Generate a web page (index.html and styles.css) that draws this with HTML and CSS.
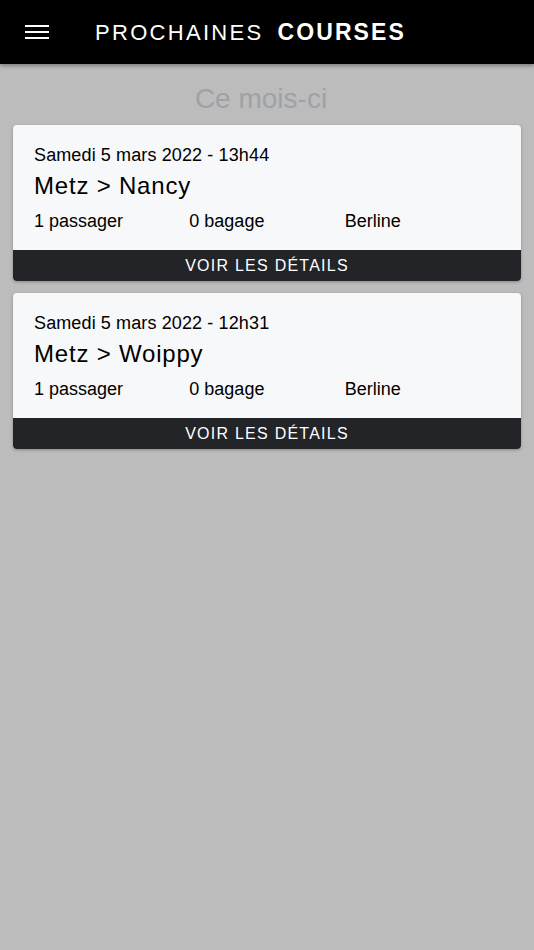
FILE: index.html
```html
<!DOCTYPE html>
<html lang="fr">
<head>
<meta charset="utf-8">
<title>Prochaines courses</title>
<link rel="stylesheet" href="styles.css">
</head>
<body>
<header class="topbar">
  <button class="menu-btn" aria-label="Menu">
    <svg width="24" height="16" viewBox="0 0 24 16"><rect x="0" y="1" width="24" height="2" fill="#fff"/><rect x="0" y="7" width="24" height="2" fill="#fff"/><rect x="0" y="13" width="24" height="2" fill="#fff"/></svg>
  </button>
  <h1 class="title"><span class="t-light">PROCHAINES</span><strong class="t-bold">COURSES</strong></h1>
</header>
<main class="content">
  <h2 class="month">Ce mois-ci</h2>
  <article class="card">
    <div class="card-body">
      <div class="date">Samedi 5 mars 2022 - 13h44</div>
      <div class="route">Metz &gt; Nancy</div>
      <div class="info">
        <span>1 passager</span>
        <span>0 bagage</span>
        <span>Berline</span>
      </div>
    </div>
    <div class="details">VOIR LES DÉTAILS</div>
  </article>
  <article class="card">
    <div class="card-body">
      <div class="date">Samedi 5 mars 2022 - 12h31</div>
      <div class="route">Metz &gt; Woippy</div>
      <div class="info">
        <span>1 passager</span>
        <span>0 bagage</span>
        <span>Berline</span>
      </div>
    </div>
    <div class="details">VOIR LES DÉTAILS</div>
  </article>
</main>
</body>
</html>
```
FILE: styles.css
```css
html, body {
  margin: 0;
  padding: 0;
}
body {
  background: #bcbcbc;
  font-family: "Liberation Sans", Arial, sans-serif;
  min-height: 950px;
}
.topbar {
  height: 64px;
  background: #000;
  display: flex;
  align-items: center;
  box-shadow: 0 2px 4px rgba(0,0,0,0.35);
  position: relative;
}
.menu-btn {
  background: none;
  border: 0;
  padding: 0;
  margin-left: 25px;
  width: 24px;
  height: 16px;
  display: flex;
  margin-top: -1px;
}
.title {
  margin: 1px 0 0 46px;
  color: #fff;
  font-size: 22px;
  font-weight: normal;
  line-height: 26px;
  display: flex;
  align-items: baseline;
}
.t-light {
  letter-spacing: 2.3px;
}
.t-bold {
  font-weight: bold;
  font-size: 23px;
  letter-spacing: 2.1px;
  margin-left: 14px;
}
.content {
  padding: 18px 13px 0;
}
.month {
  margin: 0 0 9px;
  padding-right: 12px;
  text-align: center;
  font-size: 28px;
  line-height: 34px;
  font-weight: normal;
  color: #9ea1a8;
}
.card {
  background: #f7f8fa;
  border-radius: 4px;
  overflow: hidden;
  box-shadow: 0 1px 3px rgba(0,0,0,0.3);
  margin-bottom: 12px;
}
.card-body {
  padding: 19px 21px 18px;
  color: #000;
}
.date {
  font-size: 18px;
  line-height: 22px;
  letter-spacing: 0.12px;
}
.route {
  font-size: 24px;
  line-height: 28px;
  margin-top: 6px;
  letter-spacing: 0.8px;
}
.info {
  margin-top: 10px;
  display: grid;
  grid-template-columns: repeat(3, 1fr);
  font-size: 18px;
  line-height: 22px;
}
.details {
  background: #232428;
  color: #fff;
  text-align: center;
  font-size: 16px;
  letter-spacing: 1.25px;
  line-height: 31px;
  height: 31px;
}
```
